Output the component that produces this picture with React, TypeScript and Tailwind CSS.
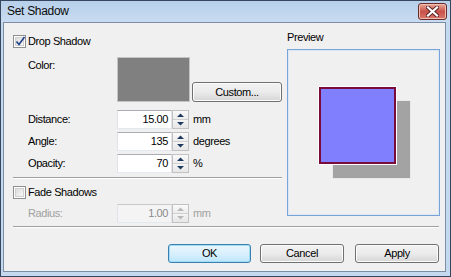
import React from "react";

function CheckBox({ checked }: { checked?: boolean }) {
  return (
    <div className="w-[13px] h-[13px] border border-[#8e8f8f] bg-white p-[1px] shrink-0">
      <div className="relative w-full h-full border border-[#d0d0d0] bg-gradient-to-br from-[#dcdcdc] to-[#f8f8f8]">
        {checked && (
          <svg className="absolute left-[-1px] top-[-2px]" width="11" height="11" viewBox="0 0 11 11">
            <path d="M1.5 5.5 L4 8.5 L9.5 1" fill="none" stroke="#1e3f8a" strokeWidth="1.6" />
          </svg>
        )}
      </div>
    </div>
  );
}

function Arrow({ up, disabled }: { up?: boolean; disabled?: boolean }) {
  return (
    <svg width="7" height="4" viewBox="0 0 7 4">
      <path d={up ? "M0 4 L3.5 0.5 L7 4 Z" : "M0 0 L3.5 3.5 L7 0 Z"} fill={disabled ? "#b8b8b8" : "#1f3a5f"} />
    </svg>
  );
}

function Spin({ disabled }: { disabled?: boolean }) {
  return (
    <div className="flex flex-col w-[17px] h-[19px] border border-[#c2c2c2] bg-[#f3f3f3]">
      <div className="flex-1 flex items-center justify-center border-b border-[#d0d0d0] bg-gradient-to-b from-[#fafafa] to-[#ececec]">
        <Arrow up disabled={disabled} />
      </div>
      <div className="flex-1 flex items-center justify-center bg-gradient-to-b from-[#f4f4f4] to-[#e6e6e6]">
        <Arrow disabled={disabled} />
      </div>
    </div>
  );
}

function NumField({ label, value, unit, disabled }: { label: string; value: string; unit: string; disabled?: boolean }) {
  const tc = disabled ? "text-[#a0a0a0]" : "text-black";
  return (
    <div className="flex items-center h-[19px]">
      <div className={`ml-[15px] w-[89px] ${tc}`}>{label}</div>
      <div
        className={`w-[55px] h-[19px] border border-[#abadb3] border-l-[#e2e3ea] border-r-[#e2e3ea] border-b-[#e3e9ef] flex items-center justify-end pr-[3px] ${
          disabled ? "bg-[#f4f4f4] text-[#8a8a8a] border-[#c8c8c8]" : "bg-white text-black"
        }`}
      >
        {value}
      </div>
      <Spin disabled={disabled} />
      <span className={`ml-[4px] ${tc}`}>{unit}</span>
    </div>
  );
}

function Button({ children, primary, className }: { children: React.ReactNode; primary?: boolean; className?: string }) {
  return (
    <div
      className={`h-[19px] rounded-[3px] border flex items-center justify-center text-black ${
        primary
          ? "border-[#3c7fb1] bg-gradient-to-b from-[#eaf6fd] via-[#d9f0fc] to-[#bee6fd] shadow-[inset_0_0_0_1px_#9fdcf5]"
          : "border-[#707070] bg-gradient-to-b from-[#f2f2f2] via-[#ebebeb] to-[#d6d6d6] shadow-[inset_0_0_0_1px_#fcfcfc]"
      } ${className ?? ""}`}
    >
      {children}
    </div>
  );
}

function Separator({ className }: { className?: string }) {
  return <div className={`h-[2px] border-t border-[#a0a0a0] border-b border-b-white ${className ?? ""}`} />;
}

export default function App() {
  return (
    <div className="w-[451px] h-[277px] border border-[#34475e] bg-[#c4d9ef] flex flex-col font-['Liberation_Sans',Arial,sans-serif] text-[11px] tracking-[-0.4px] leading-[13px] overflow-hidden">
      <div className="h-[21px] flex items-center justify-between pl-[6px] pr-[3px] bg-gradient-to-b from-[#b7cfea] to-[#c9dcf1] shrink-0">
        <span className="text-[12px] tracking-[-0.3px] text-[#0b0b0b]">Set Shadow</span>
        <div className="w-[29px] h-[17px] rounded-[3px] border border-[#6b2b2b] bg-gradient-to-b from-[#e9a99a] via-[#c8514a] to-[#d8766a] flex items-center justify-center shadow-[inset_0_0_0_1px_#eec0b4]">
          <svg width="13" height="11" viewBox="0 0 13 11">
            <path d="M2 1.5 L11 9.5 M11 1.5 L2 9.5" stroke="#5a2020" strokeWidth="4" strokeLinecap="square" />
            <path d="M2 1.5 L11 9.5 M11 1.5 L2 9.5" stroke="#ffffff" strokeWidth="2.2" strokeLinecap="square" />
          </svg>
        </div>
      </div>
      <div className="flex-1 ml-[2px] mr-[4px] mb-[4px] border border-[#7b8ea5] bg-[#f0f0f0] flex flex-col pl-[9px] pt-[8px]">
        <div className="flex">
          <div className="w-[269px] pt-[4px] flex flex-col">
            <div className="flex items-center h-[13px]">
              <CheckBox checked />
              <span className="ml-[2px] text-black">Drop Shadow</span>
            </div>
            <div className="flex mt-[9px] h-[45px]">
              <div className="ml-[15px] w-[89px] pt-[2px] text-black">Color:</div>
              <div className="w-[73px] h-[45px] border border-[#c4c4c4] bg-[#808080]" />
              <Button className="ml-[2px] w-[90px] h-[20px] self-end">Custom...</Button>
            </div>
            <div className="mt-[8px] flex flex-col gap-[3px]">
              <NumField label="Distance:" value="15.00" unit="mm" />
              <NumField label="Angle:" value="135" unit="degrees" />
              <NumField label="Opacity:" value="70" unit="%" />
            </div>
            <Separator className="mt-[4px]" />
            <div className="flex items-center h-[13px] mt-[7px]">
              <CheckBox />
              <span className="ml-[2px] text-black">Fade Shadows</span>
            </div>
            <div className="mt-[5px]">
              <NumField label="Radius:" value="1.00" unit="mm" disabled />
            </div>
          </div>
          <div className="ml-[5px] w-[153px] flex flex-col">
            <div className="h-[13px] text-black">Preview</div>
            <div className="relative mt-[5px] h-[167px] border border-[#79a4d8] bg-[#f0f0f0] shadow-[inset_0_0_0_1px_#dbe7f5]">
              <div className="absolute left-[44px] top-[50px] w-[79px] h-[79px] bg-[#a3a3a3] border border-[#e8e8e8]" />
              <div className="absolute left-[30px] top-[36px] w-[79px] h-[79px] border border-white">
                <div className="w-full h-full bg-[#8080ff] border-2 border-[#7a0a3a]" />
              </div>
            </div>
          </div>
        </div>
        <Separator className="mt-[3px] w-[426px]" />
        <div className="flex w-[426px] justify-end mt-[16px]">
          <Button primary className="w-[83px]">OK</Button>
          <Button className="ml-[9px] w-[84px]">Cancel</Button>
          <Button className="ml-[11px] w-[84px]">Apply</Button>
        </div>
      </div>
    </div>
  );
}
